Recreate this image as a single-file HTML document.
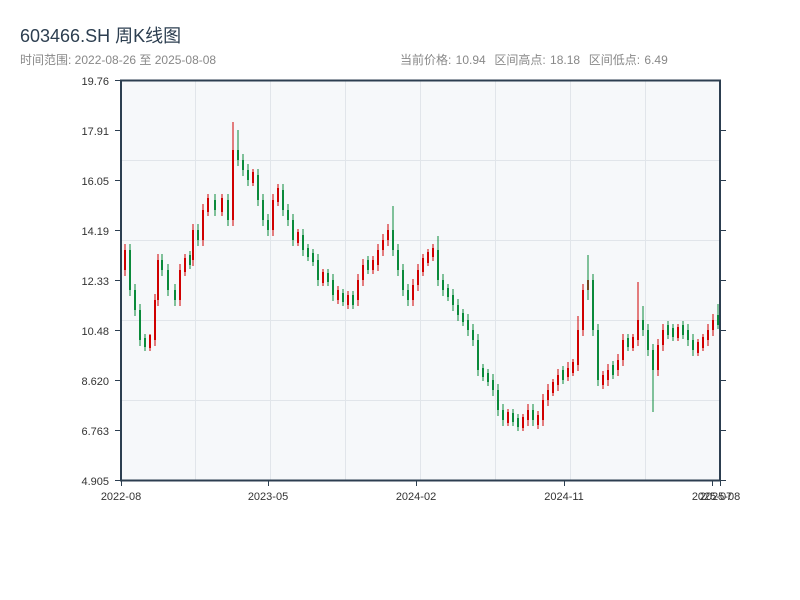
<!DOCTYPE html>
<html><head><meta charset="utf-8"><style>
body{margin:0;background:#fff;width:800px;height:600px;overflow:hidden;font-family:"Liberation Sans","Noto Sans CJK SC",sans-serif;}
.t{position:absolute;left:20px;top:22px;font-size:18px;color:#2c3e50;}
.s{position:absolute;left:20px;top:51px;font-size:12px;color:#888;}
.r{position:absolute;left:400px;top:51px;font-size:12px;color:#888;word-spacing:1px;}
</style></head><body>
<div class="t">603466.SH 周K线图</div>
<div class="s">时间范围: 2022-08-26 至 2025-08-08</div>
<div class="r">当前价格: 10.94&nbsp; 区间高点: 18.18&nbsp; 区间低点: 6.49</div>
<svg width="800" height="600" style="position:absolute;left:0;top:0" font-family="Liberation Sans, sans-serif" font-size="11" fill="#333">
<rect x="121" y="80" width="599" height="400" fill="#f6f8fa"/>
<g stroke="#e1e5ea" stroke-width="1">
<line x1="121" y1="160.5" x2="720" y2="160.5"/><line x1="121" y1="240.5" x2="720" y2="240.5"/>
<line x1="121" y1="320.5" x2="720" y2="320.5"/><line x1="121" y1="400.5" x2="720" y2="400.5"/>
<line x1="195.5" y1="80" x2="195.5" y2="480"/><line x1="270.5" y1="80" x2="270.5" y2="480"/>
<line x1="345.5" y1="80" x2="345.5" y2="480"/><line x1="420.5" y1="80" x2="420.5" y2="480"/>
<line x1="495.5" y1="80" x2="495.5" y2="480"/><line x1="570.5" y1="80" x2="570.5" y2="480"/>
<line x1="645.5" y1="80" x2="645.5" y2="480"/>
</g>
<g fill="none">
<path stroke="#d00000" stroke-width="2" d="M125,250V270M150,335V348M155,300V340M158,260V300M180,270V300M185,258V272M193,230V260M203,210V240M208,198V212M222,198V212M233,150V220M253,172V183M273,200V230M278,188V202M298,232V243M323,272V283M338,290V300M348,295V305M358,280V300M363,265V280M373,260V270M378,250V265M383,240V250M388,230V240M413,285V300M418,270V285M423,258V272M428,252V263M433,248V257M508,412V423M523,417V428M528,410V420M538,415V425M543,400V420M548,390V400M553,382V393M558,375V385M568,368V377M573,362V373M578,330V365M583,290V330M588,280V290M603,375V385M608,370V380M618,360V370M623,340V360M633,337V348M638,320V340M658,345V370M663,330V345M678,327V338M698,342V353M703,337V348M708,330V340M713,320V330"/>
<path stroke="#d00000" stroke-width="1" d="M125,244V276M150,334V351M155,294V346M158,254V306M180,264V306M185,254V276M193,224V266M203,204V246M208,194V216M222,194V216M233,122V226M253,169V186M273,194V236M278,184V206M298,229V246M323,269V286M338,286V304M348,291V309M358,274V306M363,259V286M373,256V274M378,244V271M383,234V256M388,224V246M413,279V306M418,264V291M423,254V276M428,249V266M433,244V261M508,409V426M523,414V431M528,404V426M538,411V429M543,394V426M548,384V406M553,379V396M558,369V391M568,362V381M573,359V376M578,316V371M583,284V336M588,274V296M603,371V389M608,364V386M618,354V376M623,334V366M633,334V351M638,282V346M658,339V376M663,324V351M678,324V341M698,339V356M703,334V351M708,324V346M713,314V336"/>
<path stroke="#0a8a3a" stroke-width="2" d="M130,250V290M135,290V310M140,310V340M145,338V347M162,260V270M168,270V290M175,290V300M190,255V265M198,230V240M215,200V210M228,200V220M238,150V160M243,160V170M248,170V180M258,175V200M263,200V220M268,220V230M283,190V210M288,210V220M293,220V240M303,235V250M308,248V257M313,253V262M318,260V280M328,273V282M333,280V295M343,293V302M353,295V305M368,260V270M393,230V250M398,250V270M403,270V290M408,290V300M438,250V280M443,280V290M448,288V297M453,295V305M458,305V315M463,313V322M468,320V330M473,330V340M478,340V370M483,368V377M488,373V382M493,380V390M498,390V410M503,410V420M513,413V422M518,418V427M533,410V420M563,370V380M593,280V330M598,330V380M613,365V375M628,338V347M643,320V330M648,330V350M653,350V370M668,325V335M673,328V337M683,325V335M688,330V340M693,340V350M718,315V325"/>
<path stroke="#0a8a3a" stroke-width="1" d="M130,244V296M135,284V316M140,304V346M145,334V351M162,254V276M168,264V296M175,284V306M190,251V269M198,224V246M215,194V216M228,194V226M238,130V166M243,154V176M248,164V186M258,169V206M263,194V226M268,214V236M283,184V216M288,204V226M293,214V246M303,229V256M308,244V261M313,249V266M318,254V286M328,269V286M333,274V301M343,289V306M353,291V309M368,256V274M393,206V256M398,244V276M403,264V296M408,284V306M438,236V286M443,274V296M448,284V301M453,289V311M458,299V321M463,309V326M468,314V336M473,324V346M478,334V376M483,364V381M488,369V386M493,374V396M498,384V416M503,404V426M513,409V426M518,414V431M533,404V426M563,366V384M588,255V300M593,274V336M598,324V386M613,361V379M628,334V351M643,306V336M648,324V356M653,344V412M668,321V339M673,324V341M683,321V339M688,324V346M693,334V356M718,304V329"/>
</g>
<g stroke="#2c3e50" stroke-width="2" fill="none">
<line x1="121" y1="80" x2="121" y2="481"/><line x1="120" y1="480.5" x2="721" y2="480.5"/>
<line x1="720" y1="80" x2="720" y2="481"/><line x1="120" y1="80.5" x2="721" y2="80.5"/>
</g>
<g stroke="#2c3e50" stroke-width="1">
<line x1="115" y1="80.5" x2="121" y2="80.5"/><line x1="115" y1="130.5" x2="121" y2="130.5"/>
<line x1="115" y1="180.5" x2="121" y2="180.5"/><line x1="115" y1="230.5" x2="121" y2="230.5"/>
<line x1="115" y1="280.5" x2="121" y2="280.5"/><line x1="115" y1="330.5" x2="121" y2="330.5"/>
<line x1="115" y1="380.5" x2="121" y2="380.5"/><line x1="115" y1="430.5" x2="121" y2="430.5"/>
<line x1="115" y1="480.5" x2="121" y2="480.5"/>
<line x1="720" y1="130.5" x2="726" y2="130.5"/><line x1="720" y1="180.5" x2="726" y2="180.5"/>
<line x1="720" y1="230.5" x2="726" y2="230.5"/><line x1="720" y1="280.5" x2="726" y2="280.5"/>
<line x1="720" y1="330.5" x2="726" y2="330.5"/><line x1="720" y1="380.5" x2="726" y2="380.5"/>
<line x1="720" y1="430.5" x2="726" y2="430.5"/><line x1="720" y1="480.5" x2="726" y2="480.5"/>
<line x1="121.5" y1="480" x2="121.5" y2="486"/><line x1="268.5" y1="480" x2="268.5" y2="486"/>
<line x1="416.5" y1="480" x2="416.5" y2="486"/><line x1="564.5" y1="480" x2="564.5" y2="486"/>
<line x1="712.5" y1="480" x2="712.5" y2="486"/><line x1="720.5" y1="480" x2="720.5" y2="486"/>
</g>
<g text-anchor="end">
<text x="109" y="85">19.76</text><text x="109" y="135">17.91</text><text x="109" y="185">16.05</text>
<text x="109" y="235">14.19</text><text x="109" y="285">12.33</text><text x="109" y="335">10.48</text>
<text x="109" y="385">8.620</text><text x="109" y="435">6.763</text><text x="109" y="485">4.905</text>
</g>
<g text-anchor="middle">
<text x="121" y="500">2022-08</text><text x="268" y="500">2023-05</text><text x="416" y="500">2024-02</text>
<text x="564" y="500">2024-11</text><text x="712" y="500">2025-07</text><text x="720" y="500">2025-08</text>
</g>
</svg>
</body></html>
